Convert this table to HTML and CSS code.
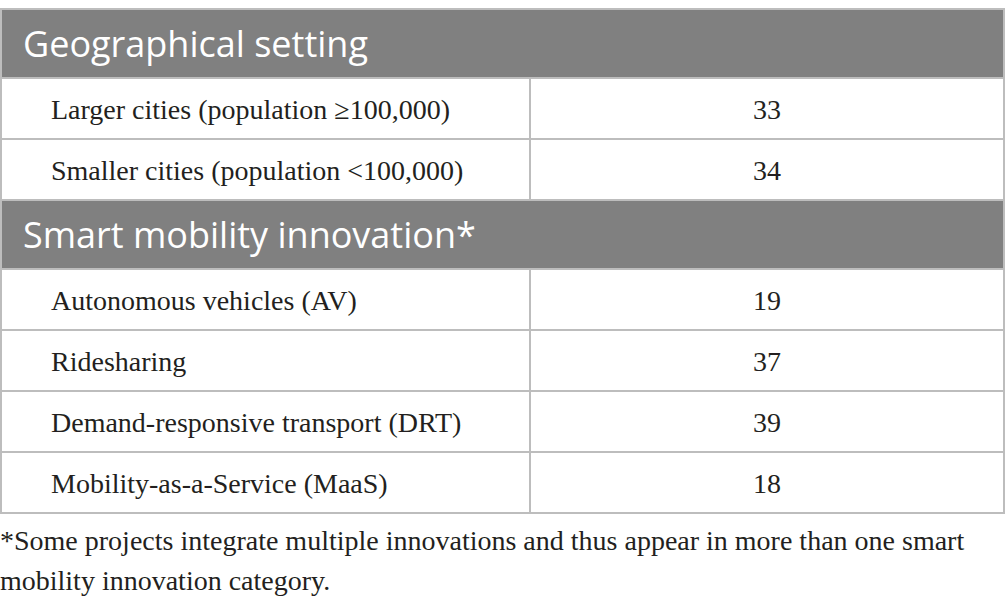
FILE: index.html
```html
<!DOCTYPE html>
<html lang="en">
<head>
    <meta charset="UTF-8">
    <title>Smart mobility projects</title>
    <link rel="stylesheet" href="styles.css">
</head>
<body>
    <table class="data-table">
        <colgroup>
            <col class="col-label">
            <col class="col-value">
        </colgroup>
        <tbody>
            <tr class="section-row">
                <th colspan="2">Geographical setting</th>
            </tr>
            <tr>
                <td>Larger cities (population &ge;100,000)</td>
                <td class="num">33</td>
            </tr>
            <tr>
                <td>Smaller cities (population &lt;100,000)</td>
                <td class="num">34</td>
            </tr>
            <tr class="section-row">
                <th colspan="2">Smart mobility innovation*</th>
            </tr>
            <tr>
                <td>Autonomous vehicles (AV)</td>
                <td class="num">19</td>
            </tr>
            <tr>
                <td>Ridesharing</td>
                <td class="num">37</td>
            </tr>
            <tr>
                <td>Demand-responsive transport (DRT)</td>
                <td class="num">39</td>
            </tr>
            <tr>
                <td>Mobility-as-a-Service (MaaS)</td>
                <td class="num">18</td>
            </tr>
        </tbody>
    </table>
    <p class="footnote">*Some projects integrate multiple innovations and thus appear in more than one smart mobility innovation category.</p>
</body>
</html>
```

FILE: styles.css
```css
body {
    margin: 0;
    padding-top: 8px;
    background: #fff;
    color: #231f20;
    font-family: "Liberation Serif", "DejaVu Serif", serif;
}
.data-table {
    width: 1005px;
    border-collapse: collapse;
    table-layout: fixed;
}
.col-label {
    width: 529px;
}
.data-table th,
.data-table td {
    border: 2px solid #bdbdbd;
}
.section-row th {
    background: #808080;
    color: #fff;
    text-align: left;
    font-family: "Open Sans", sans-serif;
    font-weight: 400;
    font-size: 36px;
    height: 67px;
    padding: 0 0 0 21px;
}
.data-table td {
    font-size: 28px;
    height: 57px;
    padding: 2px 0 0 49px;
}
.data-table td.num {
    text-align: center;
    padding: 2px 0 0 0;
}
.footnote {
    margin: 7px 0 0 0;
    font-size: 28px;
    line-height: 40px;
}
```
